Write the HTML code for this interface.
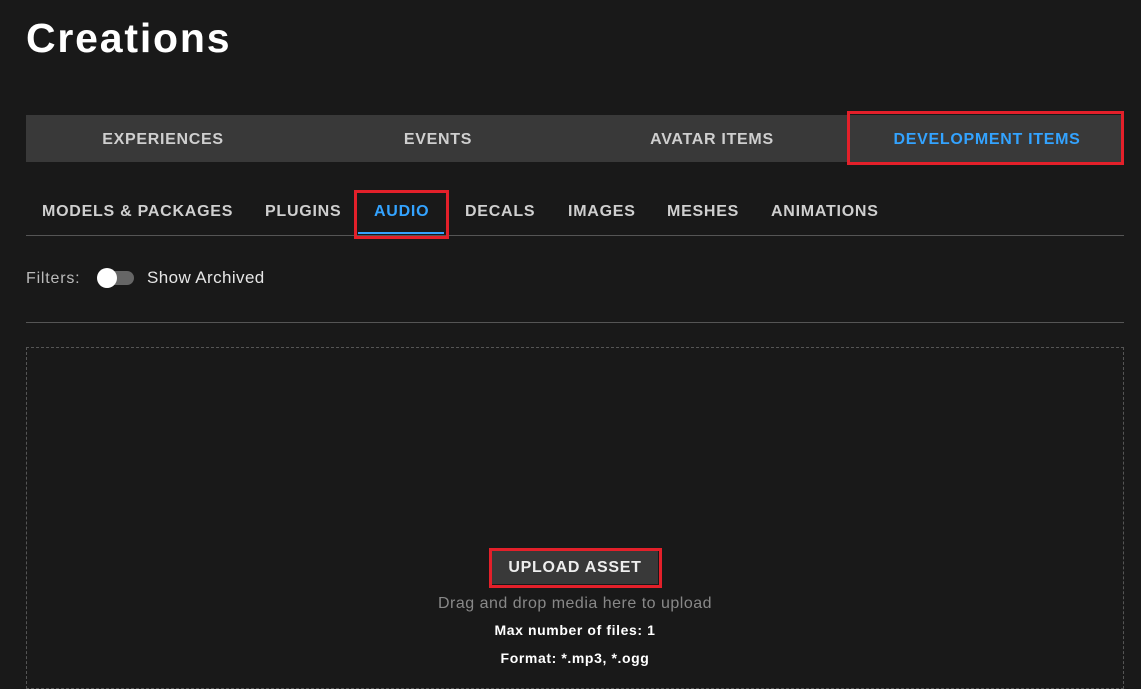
<!DOCTYPE html>
<html><head><style>
body{margin:0;width:1141px;height:666px;background:#191919;font-family:"Liberation Sans",sans-serif;color:#ddd;position:relative;overflow:hidden}
.a{position:absolute}
h1{position:absolute;left:26px;top:15px;margin:0;font-size:41px;font-weight:bold;color:#fff;letter-spacing:1.8px}
.tabs{left:26px;top:115px;width:1098px;height:47px;background:#393939}
.t{position:absolute;top:1px;height:47px;line-height:47px;font-size:16px;font-weight:bold;color:#cfcfcf;text-align:center;width:274px;letter-spacing:0.7px}
.s{position:absolute;top:203px;font-size:16px;font-weight:bold;color:#cfcfcf;letter-spacing:0.75px}
.red{position:absolute;border:3px solid #e3202a;box-sizing:border-box}
</style></head><body>
<h1>Creations</h1>
<div class="a tabs">
<div class="t" style="left:0">EXPERIENCES</div>
<div class="t" style="left:275px">EVENTS</div>
<div class="t" style="left:549px">AVATAR ITEMS</div>
<div class="t" style="left:824px;color:#33a3ff">DEVELOPMENT ITEMS</div>
</div>
<div class="red" style="left:847px;top:111px;width:277px;height:54px"></div>
<div class="s" style="left:42px">MODELS &amp; PACKAGES</div>
<div class="s" style="left:265px">PLUGINS</div>
<div class="s" style="left:374px;color:#33a3ff">AUDIO</div>
<div class="s" style="left:465px">DECALS</div>
<div class="s" style="left:568px">IMAGES</div>
<div class="s" style="left:667px">MESHES</div>
<div class="s" style="left:771px">ANIMATIONS</div>
<div class="a" style="left:26px;top:235px;width:1098px;height:1px;background:#555"></div>
<div class="a" style="left:358px;top:232px;width:86px;height:2px;background:#33a3ff"></div>
<div class="red" style="left:354px;top:190px;width:95px;height:49px"></div>
<div class="a" style="left:26px;top:270px;font-size:16px;color:#bbb;letter-spacing:0.8px">Filters:</div>
<div class="a" style="left:98px;top:271px;width:36px;height:14px;border-radius:7px;background:#666"></div>
<div class="a" style="left:97px;top:268px;width:20px;height:20px;border-radius:50%;background:#fff"></div>
<div class="a" style="left:147px;top:268px;font-size:17px;color:#e6e6e6;letter-spacing:0.4px">Show Archived</div>
<div class="a" style="left:26px;top:322px;width:1098px;height:1px;background:#555"></div>
<div class="a" style="left:26px;top:347px;width:1096px;height:340px;border:1px dashed #555"></div>
<div class="a" style="left:492px;top:551px;width:166px;height:33px;background:#393939"></div>
<div class="a" style="left:492px;top:559px;width:166px;text-align:center;font-size:16px;font-weight:bold;color:#eee;letter-spacing:0.7px">UPLOAD ASSET</div>
<div class="red" style="left:489px;top:548px;width:173px;height:40px"></div>
<div class="a" style="left:0;width:1150px;top:595px;text-align:center;font-size:16px;color:#888;letter-spacing:0.5px">Drag and drop media here to upload</div>
<div class="a" style="left:0;width:1150px;top:622px;text-align:center;font-size:14px;font-weight:bold;color:#fff;letter-spacing:0.6px">Max number of files: 1</div>
<div class="a" style="left:0;width:1150px;top:650px;text-align:center;font-size:14px;font-weight:bold;color:#fff;letter-spacing:0.6px">Format: *.mp3, *.ogg</div>
</body></html>
